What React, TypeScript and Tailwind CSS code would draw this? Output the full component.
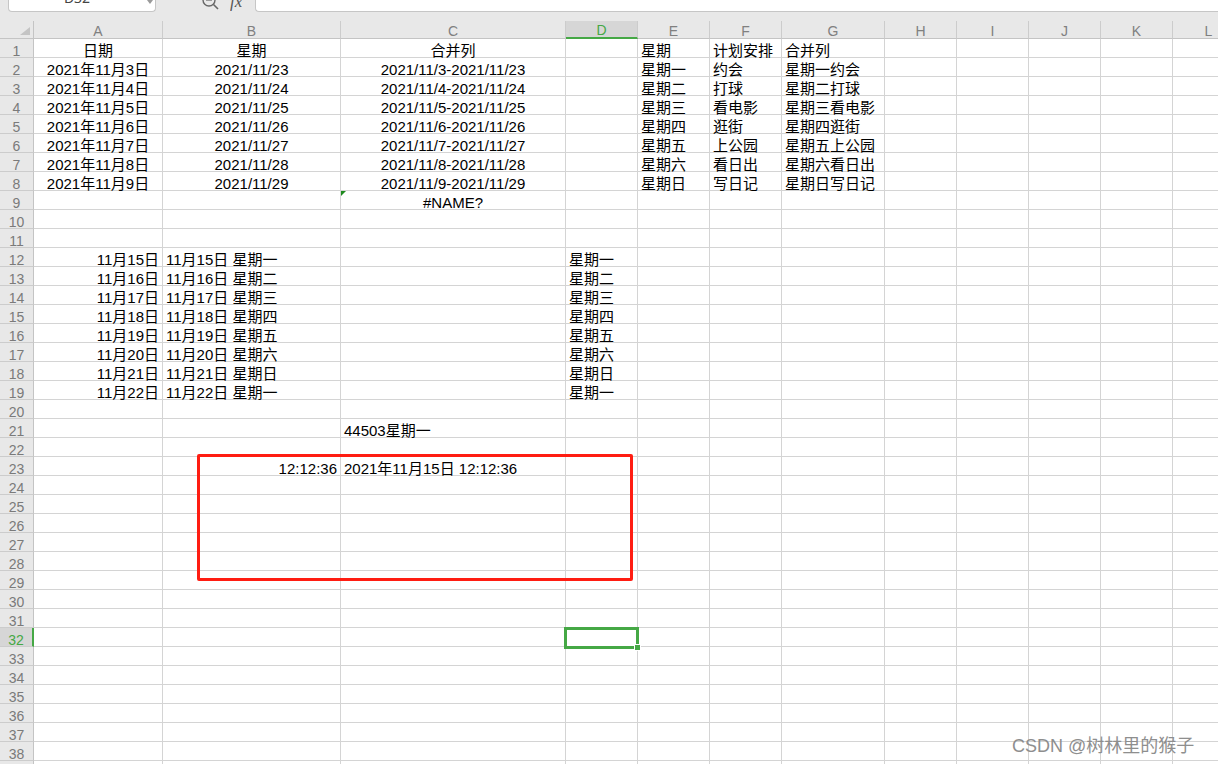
import React from "react";

type Align = "l" | "c" | "r";
type Cell = { t: string; a: Align };

const COLS = ["A", "B", "C", "D", "E", "F", "G", "H", "I", "J", "K", "L"];
const WEEK = ["一", "二", "三", "四", "五", "六", "日"];
const PLANS = ["约会", "打球", "看电影", "逛街", "上公园", "看日出", "写日记"];
const ROWS = Array.from({ length: 39 }, (_, i) => i + 1);

const GRID =
  "grid grid-cols-[34px_129px_178px_225px_72px_72px_72px_103px_72px_72px_72px_72px_72px] w-[1245px]";
const FONT = "font-['Liberation_Sans','Noto_Sans_CJK_SC',sans-serif]";

function buildData() {
  const d: Record<number, Record<string, Cell>> = {};
  const set = (r: number, c: string, t: string, a: Align) => {
    if (!d[r]) d[r] = {};
    d[r][c] = { t, a };
  };

  set(1, "A", "日期", "c");
  set(1, "B", "星期", "c");
  set(1, "C", "合并列", "c");
  set(1, "E", "星期", "l");
  set(1, "F", "计划安排", "l");
  set(1, "G", "合并列", "l");

  for (let i = 0; i < 7; i++) {
    const r = i + 2;
    set(r, "A", `2021年11月${3 + i}日`, "c");
    set(r, "B", `2021/11/${23 + i}`, "c");
    set(r, "C", `2021/11/${3 + i}-2021/11/${23 + i}`, "c");
    set(r, "E", `星期${WEEK[i]}`, "l");
    set(r, "F", PLANS[i], "l");
    set(r, "G", `星期${WEEK[i]}${PLANS[i]}`, "l");
  }

  set(9, "C", "#NAME?", "c");

  for (let i = 0; i < 8; i++) {
    const r = i + 12;
    const w = WEEK[i % 7];
    set(r, "A", `11月${15 + i}日`, "r");
    set(r, "B", `11月${15 + i}日 星期${w}`, "l");
    set(r, "D", `星期${w}`, "l");
  }

  set(21, "C", "44503星期一", "l");
  set(23, "B", "12:12:36", "r");
  set(23, "C", "2021年11月15日 12:12:36", "l");
  return d;
}

const DATA = buildData();

function alignClass(a: Align) {
  if (a === "c") return "justify-center";
  if (a === "r") return "justify-end";
  return "justify-start";
}

function FormulaBar() {
  return (
    <div className="h-[21px] bg-[#e8e8e8]">
      <div className="flex h-[12px]">
        <div className="relative ml-[8px] flex h-[12px] w-[148px] justify-center overflow-hidden rounded-b-[4px] border border-t-0 border-[#c6c6c6] bg-white">
          <span className="-mt-[10px] pr-[10px] text-[14px] leading-[16px] text-[#444]">
            D32
          </span>
          <div className="absolute right-[2px] top-0 h-0 w-0 border-x-[3px] border-t-[4px] border-x-transparent border-t-[#9a9a9a]" />
        </div>
        <div className="ml-[45px] h-[12px] w-[20px] overflow-hidden">
          <svg width="20" height="20" viewBox="0 0 20 20" className="-mt-[8px]">
            <circle cx="8" cy="8" r="6" fill="none" stroke="#666" strokeWidth="1.4" />
            <line x1="12.5" y1="12.5" x2="17" y2="17" stroke="#666" strokeWidth="1.6" />
            <line x1="5" y1="8" x2="11" y2="8" stroke="#666" strokeWidth="1.2" />
          </svg>
        </div>
        <div className="ml-[9px] h-[12px] overflow-hidden">
          <span className="-mt-[7px] block font-['Liberation_Serif',serif] text-[17px] italic leading-[18px] text-[#555]">
            fx
          </span>
        </div>
        <div className="ml-[13px] h-[12px] flex-1 rounded-bl-[4px] border border-r-0 border-t-0 border-[#c6c6c6] bg-white" />
      </div>
    </div>
  );
}

function Sheet() {
  return (
    <div className={`${GRID} ${FONT}`}>
      <div className="flex h-[18px] items-end justify-end border-b border-r border-[#c4c4c4] bg-[#e8e8e8] pb-[3px] pr-[3px]">
        <svg width="10" height="8" viewBox="0 0 10 8">
          <polygon points="10,0 10,8 0,8" fill="#c4c4c4" />
        </svg>
      </div>
      {COLS.map((c) => {
        const sel = c === "D";
        return (
          <div
            key={c}
            className={
              sel
                ? "flex h-[18px] items-end justify-center border-b-2 border-r border-b-[#45a845] border-r-[#cccccc] bg-[#d6d6d6]"
                : "flex h-[18px] items-end justify-center border-b border-r border-b-[#c4c4c4] border-r-[#cccccc] bg-[#e8e8e8]"
            }
          >
            <span
              className={
                sel
                  ? "text-[14px] leading-[14px] text-[#45a845]"
                  : "text-[14px] leading-[14px] text-[#808080]"
              }
            >
              {c}
            </span>
          </div>
        );
      })}

      {ROWS.map((r) => {
        const sel = r === 32;
        return (
          <React.Fragment key={r}>
            <div
              className={
                sel
                  ? "flex h-[19px] items-end justify-center border-b border-r-2 border-b-[#cccccc] border-r-[#45a845] bg-[#d6d6d6]"
                  : "flex h-[19px] items-end justify-center border-b border-r border-b-[#cccccc] border-r-[#c4c4c4] bg-[#e8e8e8]"
              }
            >
              <span
                className={
                  sel
                    ? "text-[14px] leading-[12px] text-[#45a845]"
                    : "text-[14px] leading-[12px] text-[#7a7a7a]"
                }
              >
                {r}
              </span>
            </div>
            {COLS.map((c) => {
              const cell = DATA[r]?.[c];
              return (
                <div
                  key={c}
                  className={`relative flex h-[19px] items-end whitespace-nowrap border-b border-r border-[#d4d4d4] px-[3px] ${
                    cell ? alignClass(cell.a) : ""
                  }`}
                >
                  {r === 9 && c === "C" && (
                    <div className="absolute left-0 top-0 h-0 w-0 border-r-[5px] border-t-[5px] border-r-transparent border-t-[#1e8a1e]" />
                  )}
                  {cell && (
                    <span className="text-[15px] leading-[12px] text-black">{cell.t}</span>
                  )}
                </div>
              );
            })}
          </React.Fragment>
        );
      })}
    </div>
  );
}

export default function App() {
  return (
    <div className="relative h-[764px] w-[1218px] overflow-hidden bg-white">
      <FormulaBar />
      <Sheet />

      {/* annotation box */}
      <div className="absolute left-[197px] top-[454px] h-[127px] w-[436px] rounded-[2px] border-[3px] border-[#ff1d12]" />

      {/* active cell D32 */}
      <div className="absolute left-[564px] top-[627px] h-[22px] w-[75px] border-[3px] border-[#45a845]" />
      <div className="absolute left-[634px] top-[644px] h-[7px] w-[7px] border border-white bg-[#45a845]" />

      <div className="absolute left-[1012px] top-[734px] font-['Liberation_Sans','Noto_Sans_CJK_SC',sans-serif] text-[18px] leading-[24px] text-[#8e8e8e]">
        CSDN @树林里的猴子
      </div>
    </div>
  );
}
